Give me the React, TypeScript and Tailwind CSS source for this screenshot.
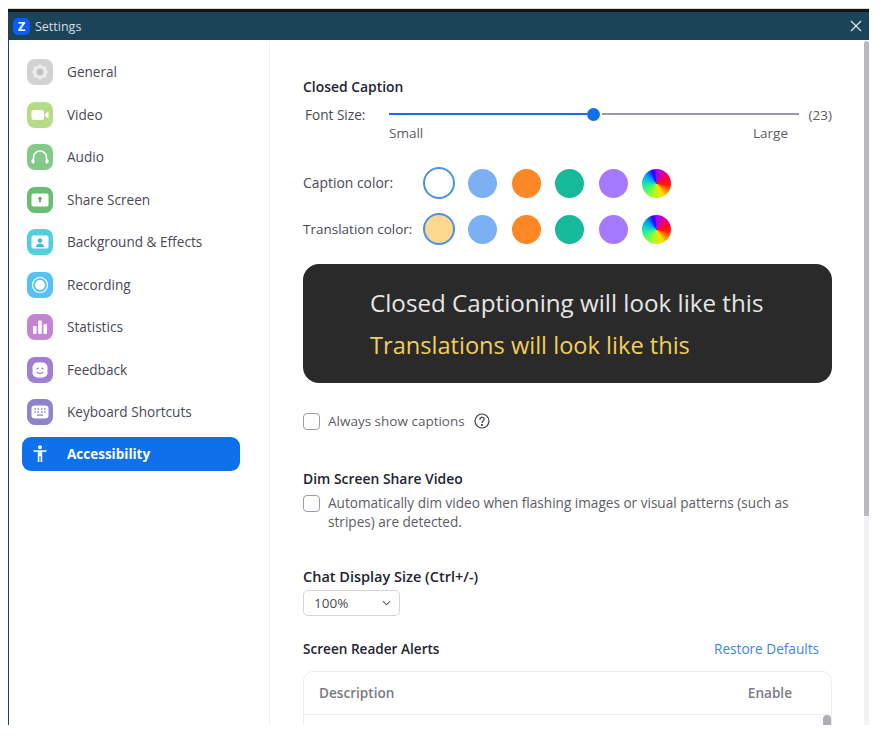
import type { ReactNode } from 'react';

const font = 'font-["Open_Sans","Liberation_Sans",sans-serif]';

function Glyph({ children }: { children: ReactNode }) {
  return (
    <svg viewBox="0 0 26 26" className="h-[26px] w-[26px]">
      {children}
    </svg>
  );
}

const navItems: { label: string; bg: string; icon: ReactNode }[] = [
  {
    label: 'General',
    bg: 'bg-[#d2d2d4]',
    icon: (
      <Glyph>
        <path
          d="M13 5.500l2 .4.9 2 2.100-.6 1.600 1.500-.6 2.100 1.800 1.100v2l-1.800 1.100.6 2.100-1.600 1.500-2.100-.6-.9 2-2 .4-2-.4-.9-2-2.100.6-1.600-1.500.6-2.100L5.200 14v-2L7 10.900l-.6-2.100L8 7.300l2.100.6.9-2z"
          fill="#ececed"
        />
        <circle cx="13" cy="13" r="3.500" fill="#c4c4c7" />
      </Glyph>
    ),
  },
  {
    label: 'Video',
    bg: 'bg-[#b6dc85]',
    icon: (
      <Glyph>
        <rect x="4.500" y="8" width="12.500" height="10" rx="2.500" fill="#fff" />
        <path d="M18 12l3.500-2.500v7L18 14z" fill="#fff" />
      </Glyph>
    ),
  },
  {
    label: 'Audio',
    bg: 'bg-[#85c98a]',
    icon: (
      <Glyph>
        <path d="M6.500 17v-3.500a6.500 6.500 0 0113 0V17" fill="none" stroke="#fff" strokeWidth="1.500" />
        <rect x="4.500" y="15" width="3" height="4.500" rx="1.500" fill="#fff" />
        <rect x="18.500" y="15" width="3" height="4.500" rx="1.500" fill="#fff" />
      </Glyph>
    ),
  },
  {
    label: 'Share Screen',
    bg: 'bg-[#69bd74]',
    icon: (
      <Glyph>
        <rect x="4.500" y="6.500" width="17" height="13" rx="2" fill="#fff" />
        <path d="M13 9.500l2.500 2.700h-1.700v3h-1.600v-3h-1.700z" fill="#3f9f55" />
      </Glyph>
    ),
  },
  {
    label: 'Background & Effects',
    bg: 'bg-[#4fd0dc]',
    icon: (
      <Glyph>
        <rect x="4.500" y="6.500" width="17" height="13" rx="2" fill="#fff" />
        <circle cx="13" cy="11.500" r="2.200" fill="#3bbccb" />
        <path d="M8.800 18c.5-2.500 2.200-3.500 4.200-3.500s3.700 1 4.200 3.500z" fill="#3bbccb" />
      </Glyph>
    ),
  },
  {
    label: 'Recording',
    bg: 'bg-[#57c1f5]',
    icon: (
      <Glyph>
        <circle cx="13" cy="13" r="7.500" fill="none" stroke="#fff" strokeWidth="1.200" />
        <circle cx="13" cy="13" r="5" fill="#fff" />
      </Glyph>
    ),
  },
  {
    label: 'Statistics',
    bg: 'bg-[#c384d3]',
    icon: (
      <Glyph>
        <rect x="6" y="12" width="3.600" height="8" rx="1" fill="#fff" />
        <rect x="11.200" y="6.500" width="3.600" height="13.500" rx="1" fill="#fff" />
        <rect x="16.400" y="10" width="3.600" height="10" rx="1" fill="#fff" />
      </Glyph>
    ),
  },
  {
    label: 'Feedback',
    bg: 'bg-[#a07fd3]',
    icon: (
      <Glyph>
        <rect x="5.500" y="5.500" width="15" height="15" rx="5" fill="#fff" />
        <circle cx="10.500" cy="11.500" r="1.100" fill="#a07fd3" />
        <circle cx="15.500" cy="11.500" r="1.100" fill="#a07fd3" />
        <path d="M9.800 15c1.800 1.600 4.600 1.600 6.400 0" fill="none" stroke="#a07fd3" strokeWidth="1.100" strokeLinecap="round" />
      </Glyph>
    ),
  },
  {
    label: 'Keyboard Shortcuts',
    bg: 'bg-[#8f82cf]',
    icon: (
      <Glyph>
        <rect x="4.500" y="6.500" width="17" height="13" rx="3" fill="#fff" />
        <path
          d="M7.500 10h1.500M10.500 10H12M14 10h1.500M17 10h1.500M7.500 13H9M10.500 13H12M14 13h1.500M17 13h1.500M10 16.200h6"
          stroke="#8f82cf"
          strokeWidth="1.300"
        />
      </Glyph>
    ),
  },
];

function NavRow({ label, bg, icon }: { label: string; bg: string; icon: ReactNode }) {
  return (
    <div className="flex h-[42.5px] items-center pl-[18px]">
      <div className={`h-[26px] w-[26px] rounded-[8px] ${bg}`}>{icon}</div>
      <span className="ml-[14px] text-[13.600px] text-[#494956]">{label}</span>
    </div>
  );
}

const swatches = ['bg-[#7bb0f2]', 'bg-[#fe8725]', 'bg-[#16ba9b]', 'bg-[#a57aff]'];

function ColorRow({ label, size, first }: { label: string; size: string; first: string }) {
  return (
    <div className="flex h-[46px] items-center">
      <span className={`w-[120px] text-[#494956] ${size}`}>{label}</span>
      <div className="flex items-center gap-[14.600px]">
        <div className={`-mr-[1.600px] h-[32px] w-[32px] rounded-full border-2 border-[#4a8fe8] ${first}`} />
        {swatches.map((s) => (
          <div key={s} className={`h-[29px] w-[29px] rounded-full ${s}`} />
        ))}
        <div className="h-[29px] w-[29px] rounded-full bg-[conic-gradient(#a000ff_0deg,#ff0040_60deg,#ff2000_100deg,#ffe000_150deg,#a0ff20_200deg,#20f0a0_260deg,#00a0ff_310deg,#2000ff_345deg,#a000ff_360deg)]" />
      </div>
    </div>
  );
}

function Checkbox() {
  return <div className="h-[17px] w-[17px] shrink-0 rounded-[4px] border border-[#9a9aa4] bg-white" />;
}

export default function App() {
  return (
    <div className={`h-[736px] w-[885px] overflow-hidden bg-white pl-[8px] pt-[8px] ${font}`}>
      <div className="h-[717px] w-[861px] border-t border-[#d8d8d8] bg-white">
        <div className="h-[3px] bg-[#141414]" />
        {/* Title bar */}
        <div className="flex h-[28px] items-center bg-[#1c4459] pl-[5px] pr-[7px]">
          <div className="flex h-[17px] w-[17px] items-center justify-center rounded-[5px] bg-[#0b5cff] text-[13px] font-bold leading-none text-white">
            Z
          </div>
          <span className="ml-[5px] translate-y-[1px] text-[12.500px] text-[#d5dee3]">Settings</span>
          <svg viewBox="0 0 12 12" className="ml-auto h-[12px] w-[12px]" fill="none" stroke="#e4eaee" strokeWidth="1.200">
            <path d="M1 1l10 10M11 1L1 11" />
          </svg>
        </div>

        <div className="flex h-[685px] border-l border-[#1c4459]">
          {/* Sidebar */}
          <aside className="w-[261px] shrink-0 border-r border-[#f0f0f3] pt-[11px]">
            {navItems.map((item) => (
              <NavRow key={item.label} {...item} />
            ))}
            <div className="ml-[13px] mt-[3px] flex h-[34px] w-[218px] items-center rounded-[9px] bg-[#0e71eb] pl-[5px]">
              <div className="flex h-[26px] w-[26px] items-center justify-center">
                <svg viewBox="0 0 16 18" className="h-[18px] w-[16px]" fill="#fff">
                  <circle cx="8" cy="2.200" r="2" />
                  <path d="M1.500 5.200h13v1.500H10.200V17H8.600v-6H7.400v6H5.800V6.700H1.500z" />
                </svg>
              </div>
              <span className="ml-[14px] pt-[1px] text-[13.500px] font-bold text-white">Accessibility</span>
            </div>
          </aside>

          {/* Main panel */}
          <main className="relative min-w-0 flex-1 overflow-hidden pl-[33px] pr-[37px] pt-[38px]">
            <h2 className="text-[13.900px] font-semibold leading-[18px] text-[#23232f]">Closed Caption</h2>

            <div className="mt-[10px] flex">
              <span className="ml-[2px] w-[84px] text-[13.600px] leading-[18px] text-[#494956]">Font Size:</span>
              <div className="w-[410px]">
                <div className="flex h-[16px] items-center">
                  <div className="h-[2px] w-[198px] bg-[#0e71eb]" />
                  <div className="h-[13px] w-[13px] rounded-full bg-[#0e71eb]" />
                  <div className="ml-[2px] h-[2px] flex-1 bg-[#9a98b0]" />
                </div>
                <div className="mt-[2px] flex justify-between pr-[11px] text-[13.500px] leading-[18px] text-[#5c5c66]">
                  <span>Small</span>
                  <span>Large</span>
                </div>
              </div>
              <span className="ml-auto text-[13.500px] leading-[18px] text-[#5c5c66]">(23)</span>
            </div>

            <div className="mt-[18px]">
              <ColorRow label="Caption color:" size="text-[13.900px]" first="bg-white" />
              <ColorRow label="Translation color:" size="text-[13.500px]" first="bg-[#fdd88f]" />
            </div>

            <div className="mt-[12px] flex h-[119px] flex-col justify-center gap-[14px] rounded-[16px] bg-[#2a2a2a] pl-[67px] pt-[1px] leading-[28px]">
              <span className="text-[24.200px] text-[#e6e6e6]">Closed Captioning will look like this</span>
              <span className="text-[23.600px] text-[#f3ce5a]">Translations will look like this</span>
            </div>

            <div className="mt-[28px] flex items-center">
              <Checkbox />
              <span className="ml-[8px] text-[13.500px] text-[#5c5c66]">Always show captions</span>
              <svg viewBox="0 0 16 16" className="ml-[9px] h-[16px] w-[16px]" fill="none" stroke="#3a3a44" strokeWidth="1.200">
                <circle cx="8" cy="8" r="7" />
                <path d="M5.900 6.300a2.100 2.100 0 114 .9c-.5.8-1.900 1-1.900 2.400" strokeLinecap="round" />
                <circle cx="8" cy="12" r=".5" fill="#3a3a44" />
              </svg>
            </div>

            <h2 className="mt-[39px] text-[13.900px] font-semibold leading-[18px] text-[#23232f]">Dim Screen Share Video</h2>
            <div className="mt-[5px] flex">
              <div className="pt-[2px]">
                <Checkbox />
              </div>
              <p className="ml-[8px] text-[13.600px] leading-[19px] text-[#5c5c66]">
                Automatically dim video when flashing images or visual patterns (such as
                <br />
                stripes) are detected.
              </p>
            </div>

            <h2 className="mt-[37px] text-[14.500px] font-semibold leading-[18px] text-[#23232f]">Chat Display Size (Ctrl+/-)</h2>
            <div className="mt-[4px] flex h-[26px] w-[97px] items-center justify-between rounded-[5px] border border-[#d4d4da] pl-[10px] pr-[8px] text-[13.500px] text-[#494956]">
              <span>100%</span>
              <svg viewBox="0 0 10 6" className="h-[6px] w-[9px]" fill="none" stroke="#5c5c66" strokeWidth="1.200">
                <path d="M1 1l4 4 4-4" />
              </svg>
            </div>

            <div className="mt-[24px] flex items-center justify-between pr-[13px]">
              <h2 className="text-[13.600px] font-semibold leading-[18px] text-[#23232f]">Screen Reader Alerts</h2>
              <span className="text-[13.600px] leading-[18px] text-[#3d84f0]">Restore Defaults</span>
            </div>

            <div className="relative mt-[13px] h-[80px] rounded-t-[10px] border border-[#ececf1]">
              <div className="flex h-[43px] items-center justify-between border-b border-[#ececf1] pl-[15px] pr-[39px] text-[13.600px] font-semibold text-[#7b7b85]">
                <span>Description</span>
                <span>Enable</span>
              </div>
              <div className="absolute right-0 top-[43px] h-[20px] w-[8px] rounded-t-[4px] bg-[#aeaeb4]" />
            </div>

            {/* Scrollbar */}
            <div className="absolute right-0 top-[1px] h-[475px] w-[5px] rounded-t-[3px] bg-[#b9b9bf]" />
            <div className="absolute bottom-0 right-0 top-[476px] w-[5px] bg-[#f2f2f6]" />
          </main>
        </div>
      </div>
    </div>
  );
}
